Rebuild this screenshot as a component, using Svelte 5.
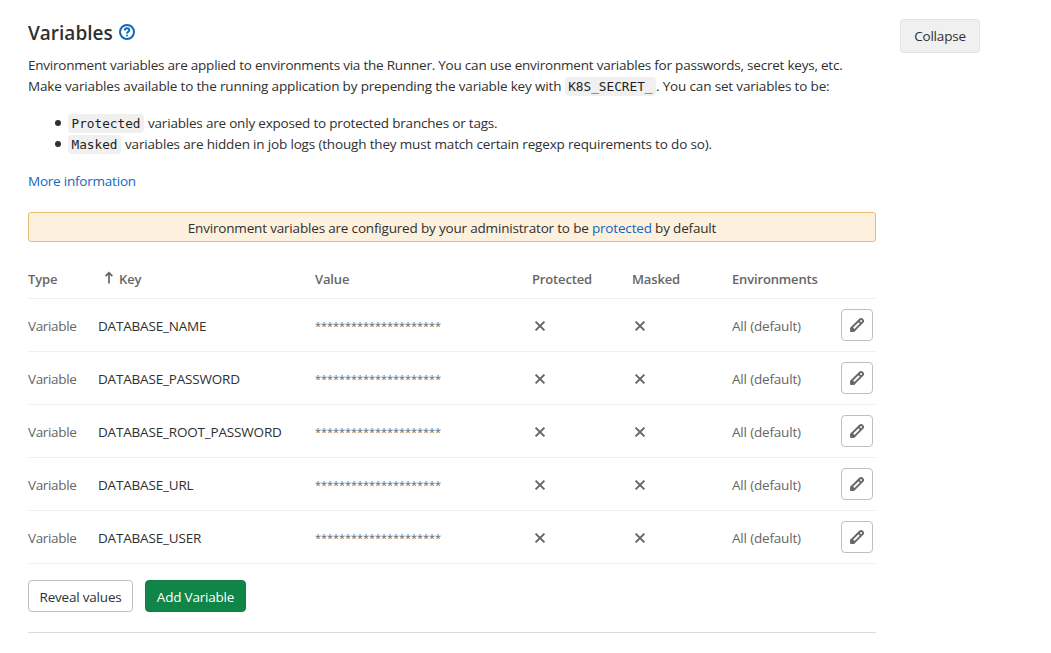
<script>
  const keys = ['DATABASE_NAME', 'DATABASE_PASSWORD', 'DATABASE_ROOT_PASSWORD', 'DATABASE_URL', 'DATABASE_USER'];
  const stars = '*'.repeat(21);
</script>

<main>
  <section class="content">
    <h1>
      <span>Variables</span>
      <svg class="help" viewBox="0 0 16 16" aria-hidden="true">
        <circle cx="8" cy="8" r="7" />
        <path d="M5.8 6.4C5.8 5 6.8 4.3 8 4.3s2.3.8 2.3 2c0 1.7-2.3 1.6-2.3 3.1" />
        <circle class="dot" cx="8" cy="11.6" r="1" />
      </svg>
    </h1>
    <p class="intro">
      <span class="l1">Environment variables are applied to environments via the Runner. You can use environment variables for passwords, secret keys, etc.</span><br />
      <span class="l2">Make variables available to the running application by prepending the variable key with</span> <code>K8S_SECRET_</code><span class="l3">. You can set variables to be:</span>
    </p>
    <ul>
      <li><code>Protected</code> <span class="l4">variables are only exposed to protected branches or tags.</span></li>
      <li><code>Masked</code> <span class="l5">variables are hidden in job logs (though they must match certain regexp requirements to do so).</span></li>
    </ul>
    <a class="more" href="#info">More information</a>
    <div class="notice"><span>Environment variables are configured by your administrator to be <a href="#protected">protected</a> by default</span></div>

    <div class="table">
      <div class="row head">
        <span>Type</span>
        <span class="sort">
          <svg viewBox="0 0 10 14" aria-hidden="true"><path d="M5 12.5V2M1.6 5.2 5 1.8l3.4 3.4" /></svg>
          Key
        </span>
        <span>Value</span>
        <span>Protected</span>
        <span>Masked</span>
        <span>Environments</span>
        <span></span>
      </div>
      {#each keys as key}
        <div class="row">
          <span class="type">Variable</span>
          <span class="key">{key}</span>
          <span class="value">{stars}</span>
          {#each [0, 1] as _}
            <span class="flag"><svg viewBox="0 0 16 16" aria-hidden="true"><path d="M3.6 3.6l8.8 8.8M12.4 3.6l-8.8 8.8" /></svg></span>
          {/each}
          <span class="env">All (default)</span>
          <button class="edit" aria-label="Edit">
            <svg viewBox="0 0 16 16" aria-hidden="true">
              <path class="outline" d="M2.2 13.9V11.2L10.9 2.5a1.7 1.7 0 0 1 2.4 0l.3.3a1.7 1.7 0 0 1 0 2.4L4.9 13.9Z" />
              <path class="outline" d="M9.6 4.2 12 6.6" />
              <path class="tip" d="M1.3 14.8V11L3 9.6 6.5 13.1 5.1 14.8Z" />
            </svg>
          </button>
        </div>
      {/each}
    </div>

    <div class="actions">
      <button class="reveal"><span>Reveal values</span></button>
      <button class="add"><span>Add Variable</span></button>
    </div>
  </section>
  <button class="collapse"><span>Collapse</span></button>
</main>

<style>
  :global(body) { background: #fff; }
  main {
    display: flex;
    align-items: flex-start;
    gap: 24px;
    padding: 19px 0 0 28px;
    font: 13.5px/21px "Open Sans", sans-serif;
    letter-spacing: -0.18px;
    color: #303030;
    white-space: nowrap;
  }
  .content { width: 848px; border-bottom: 1px solid #dbdbdb; }
  h1 {
    display: flex;
    align-items: center;
    gap: 6px;
    margin: 0 0 9px;
    font-size: 19px;
    line-height: 27px;
    font-weight: 600;
    letter-spacing: 0;
  }
  h1 span { padding-top: 1px; line-height: 26px; }
  .help { width: 16px; height: 16px; margin-top: -2px; fill: none; stroke: #1068bf; stroke-width: 2; }
  .help .dot { fill: #1068bf; stroke: none; }
  p { margin: 0 0 16px; }
  .l1 { letter-spacing: -0.22px; }
  .l2 { letter-spacing: -0.16px; }
  .l3 { letter-spacing: -0.16px; }
  .l4 { letter-spacing: -0.2px; }
  .l5 { letter-spacing: -0.165px; }
  ul { margin: 0 0 16px; padding-left: 27px; list-style: none; }
  li { display: flex; align-items: center; height: 21px; white-space: pre; }
  li::before {
    content: "";
    width: 6px;
    height: 6px;
    margin: -1px 7px 0 0;
    border-radius: 50%;
    background: #303030;
  }
  code {
    padding: 2px 3.5px;
    border-radius: 4px;
    background: #f0f0f0;
    color: #1f1f1f;
    font: 12.74px/15px "DejaVu Sans Mono", monospace;
    letter-spacing: 0;
  }
  li code { margin-right: 4px; }
  a { color: #1068bf; text-decoration: none; }
  .more { display: block; letter-spacing: -0.22px; }
  .notice {
    box-sizing: border-box;
    height: 30px;
    margin: 20px 0 20px;
    border: 1px solid #e9be74;
    border-radius: 3px;
    background: #fdf1dd;
    text-align: center;
    line-height: 30px;
  }
  .row {
    display: grid;
    grid-template-columns: 70px 217px 217px 100px 100px 109px 32px;
    align-items: center;
    height: 52px;
    border-bottom: 1px solid #f0f0f0;
    color: #666;
  }
  .row > span { padding-top: 2px; }
  .head { height: 36px; font-weight: 600; font-size: 13px; letter-spacing: -0.15px; }
  .head > span { padding: 0 0 1px; }
  .row > .sort { display: flex; align-items: center; gap: 5px; padding-left: 6px; }
  .sort svg { width: 10px; height: 14px; margin-top: -3px; fill: none; stroke: #666; stroke-width: 1.7; }
  .type { letter-spacing: -0.35px; }
  .key { color: #303030; }
  .row > .value { padding-top: 0; font-size: 11px; letter-spacing: -0.06px; }
  .head > span { font-size: 13px; }
  .flag svg { display: block; width: 16px; height: 16px; fill: none; stroke: #666; stroke-width: 2; }
  button {
    box-sizing: border-box;
    display: flex;
    align-items: center;
    justify-content: center;
    height: 32px;
    padding: 0;
    border: 1px solid #bfbfbf;
    border-radius: 4px;
    background: #fff;
    color: #303030;
    font: inherit;
    letter-spacing: -0.2px;
  }
  .edit { width: 32px; }
  .edit svg { width: 16px; height: 16px; }
  .outline { fill: none; stroke: #666; stroke-width: 1.9; }
  .tip { fill: #666; }
  .actions { display: flex; gap: 12px; padding: 16px 0 20px; }
  .actions span { padding-top: 2px; }
  .reveal { width: 105px; }
  .add { width: 101px; border-color: #16794a; background: #108548; color: #fff; }
  .collapse { width: 80px; height: 34px; border-color: #e3e3e3; background: #f0f0f0; }
</style>
